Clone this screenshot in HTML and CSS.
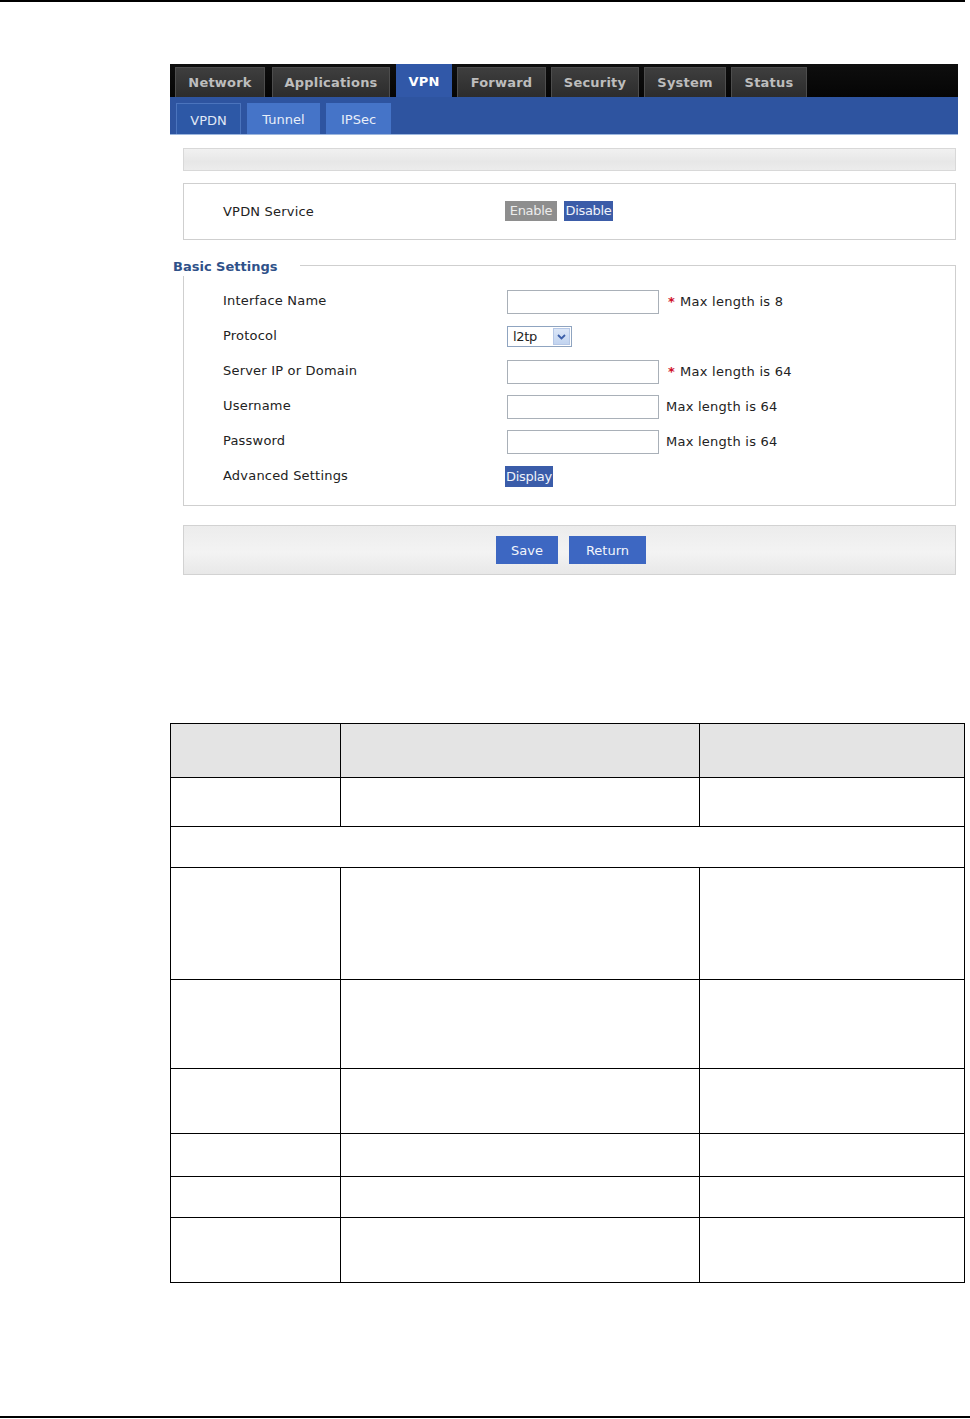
FILE: index.html
```html
<!DOCTYPE html>
<html>
<head>
<meta charset="utf-8">
<link rel="stylesheet" href="styles.css">
</head>
<body>
<div class="rule rule-top"></div>
<div class="screen">
  <div class="nav">
    <span class="tab">Network</span>
    <span class="tab">Applications</span>
    <span class="tab active">VPN</span>
    <span class="tab">Forward</span>
    <span class="tab">Security</span>
    <span class="tab">System</span>
    <span class="tab">Status</span>
  </div>
  <div class="subnav">
    <span class="subtab current">VPDN</span>
    <span class="subtab">Tunnel</span>
    <span class="subtab">IPSec</span>
  </div>
  <div class="content">
    <div class="graybar"></div>
    <div class="service">
      <span class="label">VPDN Service</span>
      <div class="toggle">
        <span class="btn-enable">Enable</span>
        <span class="btn-disable">Disable</span>
      </div>
    </div>
    <div class="fieldset">
      <div class="fs-head">
        <span class="legend">Basic Settings</span>
        <span class="fs-line"></span>
      </div>
      <div class="row">
        <span class="label">Interface Name</span>
        <span class="input"></span>
        <span class="note"><span class="req">*</span>Max length is 8</span>
      </div>
      <div class="row">
        <span class="label">Protocol</span>
        <span class="select"><span class="sel-text">l2tp</span><span class="sel-arrow"><svg width="9" height="6" viewBox="0 0 9 6"><path d="M1 1 L4.5 4.5 L8 1" fill="none" stroke="#3b5ea8" stroke-width="1.8"/></svg></span></span>
      </div>
      <div class="row">
        <span class="label">Server IP or Domain</span>
        <span class="input"></span>
        <span class="note"><span class="req">*</span>Max length is 64</span>
      </div>
      <div class="row">
        <span class="label">Username</span>
        <span class="input"></span>
        <span class="note plain">Max length is 64</span>
      </div>
      <div class="row">
        <span class="label">Password</span>
        <span class="input"></span>
        <span class="note plain">Max length is 64</span>
      </div>
      <div class="row">
        <span class="label">Advanced Settings</span>
        <span class="btn-display">Display</span>
      </div>
    </div>
    <div class="actions">
      <span class="btn-primary">Save</span>
      <span class="btn-primary wide">Return</span>
    </div>
  </div>
</div>
<table class="params">
  <tr class="head"><td class="c1"></td><td class="c2"></td><td class="c3"></td></tr>
  <tr class="h49"><td></td><td></td><td></td></tr>
  <tr class="h41"><td colspan="3"></td></tr>
  <tr class="h112"><td></td><td></td><td></td></tr>
  <tr class="h89"><td></td><td></td><td></td></tr>
  <tr class="h65"><td></td><td></td><td></td></tr>
  <tr class="h43"><td></td><td></td><td></td></tr>
  <tr class="h41"><td></td><td></td><td></td></tr>
  <tr class="h65"><td></td><td></td><td></td></tr>
</table>
<div class="rule rule-bottom"></div>
</body>
</html>
```

FILE: styles.css
```css
html, body {
  margin: 0;
  padding: 0;
  background: #fff;
}
body {
  width: 970px;
  height: 1419px;
  position: relative;
  font-family: "DejaVu Sans", Verdana, sans-serif;
  font-size: 12px;
  color: #222;
}
.rule {
  background: #000;
  height: 2px;
}
.rule-top {
  width: 965px;
  margin-top: 0;
}
.screen {
  margin-left: 170px;
  margin-top: 62px;
  width: 788px;
}
.nav {
  height: 33px;
  background: linear-gradient(#0e0e0e, #050505);
  display: flex;
  align-items: flex-end;
  padding-left: 5px;
  gap: 5px;
  box-sizing: border-box;
}
.tab {
  height: 30px;
  box-sizing: border-box;
  display: flex;
  align-items: center;
  justify-content: center;
  padding: 0 6px;
  background: linear-gradient(#3e3e3e, #2c2c2c);
  border: 1px solid #4d4d4d;
  border-bottom: none;
  color: #bdbdbd;
  font-weight: bold;
  font-size: 13px;
  letter-spacing: 0.2px;
}
.tab:nth-child(1) { width: 90px; margin-right: 2px; }
.tab:nth-child(2) { width: 118px; margin-right: 1px; }
.tab:nth-child(4) { width: 89px; }
.tab:nth-child(5) { width: 88px; }
.tab:nth-child(6) { width: 82px; }
.tab:nth-child(7) { width: 76px; }
.tab.active {
  width: 56px;
  height: 33px;
  background: #3158a8;
  border-color: #3158a8;
  color: #fff;
}
.subnav {
  height: 38px;
  background: #2e54a0;
  display: flex;
  align-items: flex-end;
  padding-left: 6px;
  gap: 6px;
  box-sizing: border-box;
  border-bottom: 1px solid #9cb6dd;
}
.subtab {
  height: 31px;
  box-sizing: border-box;
  display: flex;
  align-items: center;
  justify-content: center;
  padding-top: 2px;
  background: #4574c8;
  color: #e8eef8;
  font-size: 13px;
}
.subtab:nth-child(1) { width: 65px; }
.subtab:nth-child(2) { width: 73px; }
.subtab:nth-child(3) { width: 65px; }
.subtab.current {
  background: #2d58a6;
  border: 1px solid #4b74bd;
  border-bottom: none;
  color: #e0e8f6;
}
.content {
  margin-left: 13px;
  width: 773px;
}
.graybar {
  margin-top: 13px;
  height: 23px;
  box-sizing: border-box;
  border: 1px solid #d8d8d8;
  background: linear-gradient(#f1f1f1, #e7e7e7 60%, #ececec);
}
.service {
  margin-top: 12px;
  height: 57px;
  box-sizing: border-box;
  border: 1px solid #cfcfcf;
  display: flex;
  align-items: center;
}
.label {
  width: 282px;
  padding-left: 39px;
  flex: none;
  font-size: 13px;
  letter-spacing: 0.2px;
  color: #222;
}
.toggle {
  display: flex;
  gap: 7px;
  margin-top: -2px;
}
.btn-enable, .btn-disable, .btn-display {
  height: 20px;
  box-sizing: border-box;
  display: flex;
  align-items: center;
  justify-content: center;
  font-size: 13px;
  letter-spacing: -0.3px;
}
.btn-enable {
  width: 52px;
  background: #8e8e8e;
  color: #ececec;
}
.btn-disable {
  width: 49px;
  background: #3b5ca8;
  color: #eef2fa;
}
.fieldset {
  display: flow-root;
  margin-top: 25px;
  border: 1px solid #cfcfcf;
  border-top: none;
  padding-bottom: 11px;
}
.fs-head {
  display: flex;
  align-items: center;
  margin-left: -11px;
  height: 18px;
  margin-top: -9px;
}
.legend {
  background: #fff;
  color: #2f5189;
  font-weight: bold;
  font-size: 13px;
  padding-right: 23px;
  padding-top: 4px;
  line-height: 18px;
}
.fs-line {
  flex: 1;
  border-top: 1px solid #cfcfcf;
  margin-right: -1px;
}
.row {
  height: 35px;
  display: flex;
  align-items: center;
}
.fs-head + .row {
  margin-top: 10px;
}
.row .label {
  margin-top: -2px;
}
.input {
  width: 152px;
  height: 24px;
  margin-left: 2px;
  box-sizing: border-box;
  border: 1px solid #a9b0b8;
  background: #fff;
  flex: none;
}
.note {
  margin-left: 7px;
  font-size: 13px;
  letter-spacing: 0.25px;
  color: #222;
}
.req {
  color: #d0102a;
  margin-right: 5px;
  margin-left: 2px;
  font-weight: bold;
}
.select {
  width: 65px;
  height: 21px;
  margin-left: 2px;
  box-sizing: border-box;
  border: 1px solid #8fa4c0;
  display: flex;
  align-items: center;
  justify-content: space-between;
  padding: 1px;
  background: #fff;
}
.sel-text {
  font-size: 13px;
  padding-left: 4px;
  letter-spacing: -0.3px;
}
.sel-arrow {
  width: 17px;
  height: 17px;
  background: linear-gradient(#dbe6f7, #c2d4f0);
  border: 1px solid #b5c7e6;
  box-sizing: border-box;
  display: flex;
  align-items: center;
  justify-content: center;
}
.btn-display {
  width: 48px;
  height: 21px;
  background: #3a5ca9;
  color: #eef2fa;
}
.actions {
  margin-top: 19px;
  height: 50px;
  box-sizing: border-box;
  border: 1px solid #d2d2d2;
  background: linear-gradient(#ececec, #f3f3f3 55%, #e8e8e8);
  display: flex;
  align-items: center;
  justify-content: center;
  gap: 11px;
  padding-left: 3px;
}
.btn-primary {
  width: 62px;
  height: 28px;
  background: #3d67c2;
  color: #f2f5fb;
  font-size: 13px;
  display: flex;
  align-items: center;
  justify-content: center;
}
.btn-primary.wide {
  width: 77px;
}
.params {
  margin-left: 170px;
  margin-top: 148px;
  border-collapse: collapse;
  width: 795px;
  table-layout: fixed;
}
.params td {
  border: 1.5px solid #000;
  padding: 0;
}
.params .c1 { width: 169px; }
.params .c2 { width: 358px; }
.params .head td {
  background: #e4e4e4;
  height: 53px;
}
.params .h49 td { height: 48px; }
.params .h41 td { height: 40px; }
.params .h112 td { height: 111px; }
.params .h89 td { height: 88px; }
.params .h65 td { height: 64px; }
.params .h43 td { height: 42px; }
.rule-bottom {
  position: absolute;
  left: 0;
  top: 1416px;
  width: 970px;
}
```
